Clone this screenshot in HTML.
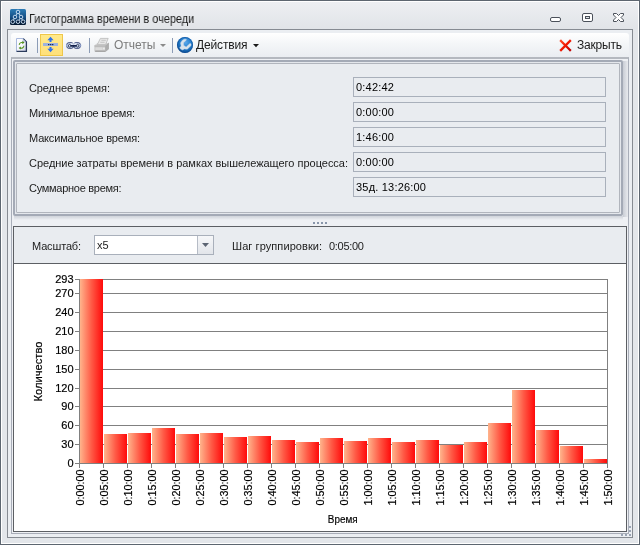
<!DOCTYPE html>
<html lang="ru">
<head>
<meta charset="utf-8">
<title>Гистограмма времени в очереди</title>
<style>
html,body{margin:0;padding:0;}
body{width:640px;height:545px;overflow:hidden;background:#e3e6ea;font-family:"Liberation Sans",sans-serif;font-size:11px;color:#1c1c1c;position:relative;}
.abs{position:absolute;}
.t{position:absolute;white-space:nowrap;line-height:14px;height:14px;transform-origin:0 50%;will-change:transform;}
#win{left:0;top:0;width:638px;height:543px;border:1px solid #5d6670;}
#winin{left:1px;top:1px;width:636px;height:541px;border:1px solid #ffffff;background:#e3e6ea;}
#titlebg{left:2px;top:2px;width:636px;height:27px;background:linear-gradient(#edeff2,#e1e4e8);}
#title{left:29px;top:11px;font-size:12px;line-height:16px;height:16px;color:#1a1a1a;transform:scaleX(0.908);}
#frame{left:7px;top:29px;width:624px;height:507px;border:1px solid #868b92;background:#ebeef2;}
#toolbar{left:11px;top:33px;width:618px;height:24px;border-radius:3px 3px 0 0;background:linear-gradient(#ffffff,#f4f6f8 45%,#eaedf1);}
.sep{width:1px;height:15px;top:38px;background:#8c9cb6;}
.tb{font-size:12px;line-height:16px;height:16px;top:37px;}
#outer{left:11px;top:57px;width:616px;height:475px;border:1px solid #a9aeb9;border-top:2px solid #b4b8bf;height:474px;background:#eef0f4;}
#grp{left:13px;top:60px;width:606px;height:152px;border:2px solid #a4aab6;background:#e4e7ec;border-radius:2px;}
#grpin{left:16px;top:63px;width:602px;height:148px;border:1px solid #b1b5bd;background:#e9ecf0;border-radius:1px;}
#shr{left:623px;top:61px;width:5px;height:156px;background:linear-gradient(90deg,#c9cdd5,#e8eaee);}
#shb{left:14px;top:216px;width:609px;height:4px;background:linear-gradient(#cfd3da,#eef0f4);}
.lbl{left:29px;}
.fld{left:353px;width:251px;height:18px;border:1px solid #a9b0bb;background:#e9ecf0;}
.fv{left:356px;color:#000;}
.dot{width:2px;height:2px;top:222px;background:#8996aa;}
#bot{left:13px;top:226px;width:612px;height:304px;border:1px solid #5c5f64;background:#e9ecf0;}
#chart{left:14px;top:263px;width:612px;height:267px;border-top:1px solid #5c5f64;background:#ffffff;}
#combo{left:94px;top:235px;width:118px;height:18px;border:1px solid #a9b0bb;background:#ffffff;}
#combobtn{left:197px;top:236px;width:15px;height:18px;border-left:1px solid #b6bcc6;background:linear-gradient(#f6f7f9,#e2e5ea);}
.grip{width:2px;height:2px;background:#9aa4b4;}
svg{will-change:transform;}
svg text{font-family:"Liberation Sans",sans-serif;font-size:11px;fill:#000;stroke:#000;stroke-width:0.18px;}
</style>
</head>
<body>
<div id="win" class="abs"></div>
<div id="winin" class="abs"></div>
<div id="titlebg" class="abs"></div>
<div id="title" class="t">Гистограмма времени в очереди</div>
<div id="frame" class="abs"></div>
<div id="toolbar" class="abs"></div>
<div class="abs" style="left:40px;top:34px;width:21px;height:20px;border:1px solid #efc74a;background:linear-gradient(#ffe98a,#ffe07a);"></div>
<div class="abs sep" style="left:37px"></div>
<div class="abs sep" style="left:89px"></div>
<div class="abs sep" style="left:172px"></div>
<div class="t tb" style="left:113.5px;color:#7c7c7c;letter-spacing:0px">Отчеты</div>
<div class="t tb" style="left:196px;letter-spacing:-0.15px">Действия</div>
<div class="t tb" style="left:577px;letter-spacing:-0.2px">Закрыть</div>
<svg class="abs" style="left:0;top:0" width="640" height="60" viewBox="0 0 640 60">
<defs>
<linearGradient id="gApp" x1="0" y1="0" x2="0" y2="1"><stop offset="0" stop-color="#2c7cb6"/><stop offset="0.55" stop-color="#134a80"/><stop offset="1" stop-color="#04162c"/></linearGradient>
<linearGradient id="gPage" x1="0" y1="0" x2="1" y2="1"><stop offset="0" stop-color="#ffffff"/><stop offset="0.55" stop-color="#f4f5fb"/><stop offset="1" stop-color="#c4c8e0"/></linearGradient>
<radialGradient id="gGlobe" cx="0.55" cy="0.35" r="0.7"><stop offset="0" stop-color="#58a6ea"/><stop offset="0.55" stop-color="#1e78c8"/><stop offset="1" stop-color="#0a4488"/></radialGradient>
<linearGradient id="gX" x1="0" y1="0" x2="1" y2="1"><stop offset="0" stop-color="#ff4422"/><stop offset="0.5" stop-color="#f01800"/><stop offset="1" stop-color="#c00000"/></linearGradient>
</defs>
<!-- app icon -->
<rect x="10" y="9" width="16" height="16" rx="1.5" fill="url(#gApp)"/>
<g stroke="#d4e6fa" stroke-width="0.8" fill="none">
<path d="M18 12L15 17L12.7 21.7M18 12L21 17L23 21.7M21 17L18 21.7"/>
</g>
<g stroke="#dcecfc" stroke-width="0.85" fill="#1f64a2">
<circle cx="18" cy="12" r="1.8"/><circle cx="15" cy="17" r="1.8" fill="#15508a"/><circle cx="21" cy="17" r="1.8" fill="#15508a"/>
<circle cx="12.7" cy="21.7" r="1.8" fill="#061c3a"/><circle cx="18" cy="21.7" r="1.8" fill="#061c3a"/><circle cx="23.1" cy="21.7" r="1.8" fill="#061c3a"/>
</g>
<!-- window buttons -->
<rect x="550.5" y="17.5" width="10" height="4" rx="1.5" fill="#ffffff" stroke="#4b515a"/>
<rect x="582.5" y="13.5" width="10" height="8" rx="1.5" fill="#ffffff" stroke="#4b515a"/>
<rect x="585.5" y="16.5" width="4" height="2" fill="#dfe3e8" stroke="#4b515a"/>
<path d="M613.5 13.5H616.5L618.5 15.5L620.5 13.5H623.5V15L621 17.5L623.5 20V21.5H620.5L618.5 19.5L616.5 21.5H613.5V20L616 17.5L613.5 15Z" fill="#ffffff" stroke="#4b515a" stroke-linejoin="round"/>
<!-- refresh page icon -->
<path d="M16.5 38.5H23.3L26.5 41.7V51.5H16.5Z" fill="url(#gPage)" stroke="#a9b9dc"/>
<path d="M16.6 51.4H26.4V41.6" fill="none" stroke="#2a3b5c" stroke-width="1.3"/>
<path d="M23.3 38.6L26.5 41.8" fill="none" stroke="#2f4064" stroke-width="1.1"/>
<path d="M23.2 39.4V41.8H25.6" fill="#eef1f8" stroke="#8a9abc" stroke-width="0.6"/>
<g fill="none" stroke="#55961a" stroke-width="1.05">
<path d="M19.2 44.9A2.6 2.6 0 0 1 22.7 42.6"/>
<path d="M23.9 45.7A2.6 2.6 0 0 1 20.4 48"/>
</g>
<path d="M22.3 41L24.5 42.6L22.3 44.2Z" fill="#4a8a12"/>
<path d="M20.8 46.4L18.6 48L20.8 49.6Z" fill="#4a8a12"/>
<!-- split icon -->
<path d="M50.5 36.8L53.6 40.2H51.5V42H49.5V40.2H47.4Z" fill="#2f72ea"/>
<rect x="43" y="43" width="15" height="3" fill="#9db2dc"/>
<rect x="48" y="44" width="1.4" height="1.2" fill="#1b2b5c"/><rect x="50" y="44" width="1.4" height="1.2" fill="#1b2b5c"/><rect x="52" y="44" width="1.4" height="1.2" fill="#1b2b5c"/>
<path d="M50.5 52.2L53.6 48.8H51.5V47H49.5V48.8H47.4Z" fill="#2f72ea"/>
<!-- chain icon -->
<g fill="#dbe5f7" stroke="#2a3a70" stroke-width="0.95">
<rect x="66.5" y="42.5" width="7.2" height="6" rx="3"/>
<rect x="73.4" y="42.5" width="7.2" height="6" rx="3"/>
</g>
<path d="M66.5 44.4V46.6M80.6 44.4V46.6" stroke="#93a4d2" stroke-width="1"/>
<rect x="70.4" y="43.4" width="6.4" height="1.4" fill="#e6edfa"/>
<g fill="none" stroke="#15234c" stroke-width="1">
<path d="M70.6 44.3A1.7 1.5 0 1 0 70.6 47.1"/>
<path d="M76.6 44.3A1.7 1.5 0 1 1 76.6 47.1"/>
</g>
<rect x="70" y="45" width="7.2" height="1.8" rx="0.8" fill="#15234c"/>
<!-- printer icon (disabled) -->
<path d="M94.4 45.6L98 43H108.9V49L105.2 52H95.2L94.4 51.2Z" fill="#c9c9c9"/>
<path d="M105.1 45.6L108.9 42.4V49L105.3 52Z" fill="#adadad"/>
<path d="M94.4 45.6L97.6 43.1H108.2L105.1 45.6Z" fill="#d6d6d6"/>
<path d="M100.4 38.4H108.2L105.6 44.6H97.3Z" fill="#e7e7e7" stroke="#b9b9b9" stroke-width="0.8"/>
<path d="M101.4 40.3H105.8M100.3 42.3H104.6" stroke="#bdbdbd" stroke-width="0.8"/>
<rect x="94.5" y="45.5" width="10.6" height="1.1" fill="#b4b4b4"/>
<rect x="95.4" y="47.4" width="7.2" height="2.6" fill="#dcdcdc"/>
<rect x="95.2" y="50.6" width="10" height="1.4" fill="#a6a6a6"/>
<rect x="103.2" y="47.6" width="1.5" height="1.9" fill="#f2f2f2"/>
<!-- dropdown arrows -->
<path d="M160 44H166L163 47Z" fill="#8a8a8a"/>
<path d="M253 44H259L256 47.2Z" fill="#1a1a1a"/>
<!-- globe/wrench icon -->
<circle cx="185" cy="45" r="8" fill="url(#gGlobe)"/>
<circle cx="185" cy="45" r="7.6" fill="none" stroke="#0d4a94" stroke-width="0.8" opacity="0.7"/>
<path d="M184.1 39.2H186.1L186.5 40L183.7 42.7V45.3L186.1 46.9L190.1 43.3L191.1 44.1L190.9 45.7L187.3 49.3L184.1 48.9L182.9 50.1L180.9 49.3L179.6 47.7L181.1 46.1L180.5 42.9L182.1 40.5Z" fill="#dae3ec" stroke="#c0d0e2" stroke-width="0.4"/>
<!-- close X -->
<path d="M561 41L570 50M570 41L561 50" stroke="url(#gX)" stroke-width="2.3" stroke-linecap="square" fill="none"/>
</svg>
<div id="outer" class="abs"></div>
<div id="grp" class="abs"></div>
<div id="shr" class="abs"></div>
<div id="shb" class="abs"></div>
<div id="grpin" class="abs"></div>
<div class="t lbl" style="top:81px;letter-spacing:-0.108px">Среднее время:</div>
<div class="abs fld" style="top:77px"></div>
<div class="t fv" style="top:80px;letter-spacing:0.2px">0:42:42</div>
<div class="t lbl" style="top:106px;letter-spacing:-0.200px">Минимальное время:</div>
<div class="abs fld" style="top:102px"></div>
<div class="t fv" style="top:105px;letter-spacing:0.2px">0:00:00</div>
<div class="t lbl" style="top:131px;letter-spacing:-0.156px">Максимальное время:</div>
<div class="abs fld" style="top:127px"></div>
<div class="t fv" style="top:130px;letter-spacing:0.2px">1:46:00</div>
<div class="t lbl" style="top:156px;letter-spacing:-0.019px">Средние затраты времени в рамках вышележащего процесса:</div>
<div class="abs fld" style="top:152px"></div>
<div class="t fv" style="top:155px;letter-spacing:0.2px">0:00:00</div>
<div class="t lbl" style="top:181px;letter-spacing:-0.280px">Суммарное время:</div>
<div class="abs fld" style="top:177px"></div>
<div class="t fv" style="top:180px;letter-spacing:0.2px">35д. 13:26:00</div>
<div class="abs dot" style="left:313px"></div>
<div class="abs dot" style="left:317px"></div>
<div class="abs dot" style="left:321px"></div>
<div class="abs dot" style="left:325px"></div>
<div id="bot" class="abs"></div>
<div id="chart" class="abs"></div>
<svg class="abs" style="left:14px;top:264px" width="612" height="267" viewBox="14 264 612 267" shape-rendering="crispEdges">
<defs><linearGradient id="bg" x1="0" y1="0" x2="1" y2="0"><stop offset="0" stop-color="#ffb48c"/><stop offset="0.5" stop-color="#ff5a46"/><stop offset="1" stop-color="#ff0a0a"/></linearGradient></defs>
<rect x="75" y="279" width="533" height="1" fill="#808080"/>
<rect x="75" y="293" width="533" height="1" fill="#808080"/>
<rect x="75" y="312" width="533" height="1" fill="#808080"/>
<rect x="75" y="331" width="533" height="1" fill="#808080"/>
<rect x="75" y="350" width="533" height="1" fill="#808080"/>
<rect x="75" y="369" width="533" height="1" fill="#808080"/>
<rect x="75" y="388" width="533" height="1" fill="#808080"/>
<rect x="75" y="406" width="533" height="1" fill="#808080"/>
<rect x="75" y="425" width="533" height="1" fill="#808080"/>
<rect x="75" y="444" width="533" height="1" fill="#808080"/>
<rect x="75" y="463" width="533" height="1" fill="#808080"/>
<rect x="79" y="279" width="1" height="189" fill="#808080"/>
<rect x="607" y="279" width="1" height="185" fill="#808080"/>
<rect x="80" y="279" width="23" height="184" fill="url(#bg)"/>
<rect x="104" y="434" width="23" height="29" fill="url(#bg)"/>
<rect x="128" y="433" width="23" height="30" fill="url(#bg)"/>
<rect x="152" y="428" width="23" height="35" fill="url(#bg)"/>
<rect x="176" y="434" width="23" height="29" fill="url(#bg)"/>
<rect x="200" y="433" width="23" height="30" fill="url(#bg)"/>
<rect x="224" y="437" width="23" height="26" fill="url(#bg)"/>
<rect x="248" y="436" width="23" height="27" fill="url(#bg)"/>
<rect x="272" y="440" width="23" height="23" fill="url(#bg)"/>
<rect x="296" y="442" width="23" height="21" fill="url(#bg)"/>
<rect x="320" y="438" width="23" height="25" fill="url(#bg)"/>
<rect x="344" y="441" width="23" height="22" fill="url(#bg)"/>
<rect x="368" y="438" width="23" height="25" fill="url(#bg)"/>
<rect x="392" y="442" width="23" height="21" fill="url(#bg)"/>
<rect x="416" y="440" width="23" height="23" fill="url(#bg)"/>
<rect x="440" y="445" width="23" height="18" fill="url(#bg)"/>
<rect x="464" y="442" width="23" height="21" fill="url(#bg)"/>
<rect x="488" y="423" width="23" height="40" fill="url(#bg)"/>
<rect x="512" y="390" width="23" height="73" fill="url(#bg)"/>
<rect x="536" y="430" width="23" height="33" fill="url(#bg)"/>
<rect x="560" y="446" width="23" height="17" fill="url(#bg)"/>
<rect x="584" y="459" width="23" height="4" fill="url(#bg)"/>
<rect x="79" y="463" width="1" height="5" fill="#808080"/>
<rect x="103" y="463" width="1" height="5" fill="#808080"/>
<rect x="127" y="463" width="1" height="5" fill="#808080"/>
<rect x="151" y="463" width="1" height="5" fill="#808080"/>
<rect x="175" y="463" width="1" height="5" fill="#808080"/>
<rect x="199" y="463" width="1" height="5" fill="#808080"/>
<rect x="223" y="463" width="1" height="5" fill="#808080"/>
<rect x="247" y="463" width="1" height="5" fill="#808080"/>
<rect x="271" y="463" width="1" height="5" fill="#808080"/>
<rect x="295" y="463" width="1" height="5" fill="#808080"/>
<rect x="319" y="463" width="1" height="5" fill="#808080"/>
<rect x="343" y="463" width="1" height="5" fill="#808080"/>
<rect x="367" y="463" width="1" height="5" fill="#808080"/>
<rect x="391" y="463" width="1" height="5" fill="#808080"/>
<rect x="415" y="463" width="1" height="5" fill="#808080"/>
<rect x="439" y="463" width="1" height="5" fill="#808080"/>
<rect x="463" y="463" width="1" height="5" fill="#808080"/>
<rect x="487" y="463" width="1" height="5" fill="#808080"/>
<rect x="511" y="463" width="1" height="5" fill="#808080"/>
<rect x="535" y="463" width="1" height="5" fill="#808080"/>
<rect x="559" y="463" width="1" height="5" fill="#808080"/>
<rect x="583" y="463" width="1" height="5" fill="#808080"/>
<rect x="607" y="463" width="1" height="5" fill="#808080"/>
<g shape-rendering="auto">
<text x="73.6" y="283" text-anchor="end">293</text>
<text x="73.6" y="297" text-anchor="end">270</text>
<text x="73.6" y="316" text-anchor="end">240</text>
<text x="73.6" y="335" text-anchor="end">210</text>
<text x="73.6" y="354" text-anchor="end">180</text>
<text x="73.6" y="373" text-anchor="end">150</text>
<text x="73.6" y="392" text-anchor="end">120</text>
<text x="73.6" y="410" text-anchor="end">90</text>
<text x="73.6" y="429" text-anchor="end">60</text>
<text x="73.6" y="448" text-anchor="end">30</text>
<text x="73.6" y="467" text-anchor="end">0</text>
<text transform="translate(84,469.6) rotate(-90)" text-anchor="end" textLength="36" lengthAdjust="spacingAndGlyphs">0:00:00</text>
<text transform="translate(108,469.6) rotate(-90)" text-anchor="end" textLength="36" lengthAdjust="spacingAndGlyphs">0:05:00</text>
<text transform="translate(132,469.6) rotate(-90)" text-anchor="end" textLength="36" lengthAdjust="spacingAndGlyphs">0:10:00</text>
<text transform="translate(156,469.6) rotate(-90)" text-anchor="end" textLength="36" lengthAdjust="spacingAndGlyphs">0:15:00</text>
<text transform="translate(180,469.6) rotate(-90)" text-anchor="end" textLength="36" lengthAdjust="spacingAndGlyphs">0:20:00</text>
<text transform="translate(204,469.6) rotate(-90)" text-anchor="end" textLength="36" lengthAdjust="spacingAndGlyphs">0:25:00</text>
<text transform="translate(228,469.6) rotate(-90)" text-anchor="end" textLength="36" lengthAdjust="spacingAndGlyphs">0:30:00</text>
<text transform="translate(252,469.6) rotate(-90)" text-anchor="end" textLength="36" lengthAdjust="spacingAndGlyphs">0:35:00</text>
<text transform="translate(276,469.6) rotate(-90)" text-anchor="end" textLength="36" lengthAdjust="spacingAndGlyphs">0:40:00</text>
<text transform="translate(300,469.6) rotate(-90)" text-anchor="end" textLength="36" lengthAdjust="spacingAndGlyphs">0:45:00</text>
<text transform="translate(324,469.6) rotate(-90)" text-anchor="end" textLength="36" lengthAdjust="spacingAndGlyphs">0:50:00</text>
<text transform="translate(348,469.6) rotate(-90)" text-anchor="end" textLength="36" lengthAdjust="spacingAndGlyphs">0:55:00</text>
<text transform="translate(372,469.6) rotate(-90)" text-anchor="end" textLength="36" lengthAdjust="spacingAndGlyphs">1:00:00</text>
<text transform="translate(396,469.6) rotate(-90)" text-anchor="end" textLength="36" lengthAdjust="spacingAndGlyphs">1:05:00</text>
<text transform="translate(420,469.6) rotate(-90)" text-anchor="end" textLength="36" lengthAdjust="spacingAndGlyphs">1:10:00</text>
<text transform="translate(444,469.6) rotate(-90)" text-anchor="end" textLength="36" lengthAdjust="spacingAndGlyphs">1:15:00</text>
<text transform="translate(468,469.6) rotate(-90)" text-anchor="end" textLength="36" lengthAdjust="spacingAndGlyphs">1:20:00</text>
<text transform="translate(492,469.6) rotate(-90)" text-anchor="end" textLength="36" lengthAdjust="spacingAndGlyphs">1:25:00</text>
<text transform="translate(516,469.6) rotate(-90)" text-anchor="end" textLength="36" lengthAdjust="spacingAndGlyphs">1:30:00</text>
<text transform="translate(540,469.6) rotate(-90)" text-anchor="end" textLength="36" lengthAdjust="spacingAndGlyphs">1:35:00</text>
<text transform="translate(564,469.6) rotate(-90)" text-anchor="end" textLength="36" lengthAdjust="spacingAndGlyphs">1:40:00</text>
<text transform="translate(588,469.6) rotate(-90)" text-anchor="end" textLength="36" lengthAdjust="spacingAndGlyphs">1:45:00</text>
<text transform="translate(612,469.6) rotate(-90)" text-anchor="end" textLength="36" lengthAdjust="spacingAndGlyphs">1:50:00</text>
<text transform="translate(42.4,371.5) rotate(-90)" text-anchor="middle" textLength="60" lengthAdjust="spacingAndGlyphs">Количество</text>
<text x="342.7" y="523" text-anchor="middle" textLength="29.8" lengthAdjust="spacingAndGlyphs">Время</text>
</g></svg>
<div class="t" style="left:32px;top:239px;letter-spacing:-0.15px">Масштаб:</div>
<div id="combo" class="abs"></div>
<div id="combobtn" class="abs"></div>
<svg class="abs" style="left:202px;top:243px" width="8" height="5" viewBox="0 0 8 5"><path d="M0 0H7L3.5 4Z" fill="#5b6472"/></svg>
<div class="t" style="left:97px;top:238px">x5</div>
<div class="t" style="left:232px;top:239px;letter-spacing:0.08px">Шаг группировки:</div>
<div class="t" style="left:329px;top:239px;letter-spacing:-0.3px">0:05:00</div>
<div class="abs grip" style="left:629px;top:526px"></div>
<div class="abs grip" style="left:629px;top:530px"></div>
<div class="abs grip" style="left:629px;top:534px"></div>
<div class="abs grip" style="left:625px;top:534px"></div>
<div class="abs grip" style="left:621px;top:534px"></div>
</body>
</html>
